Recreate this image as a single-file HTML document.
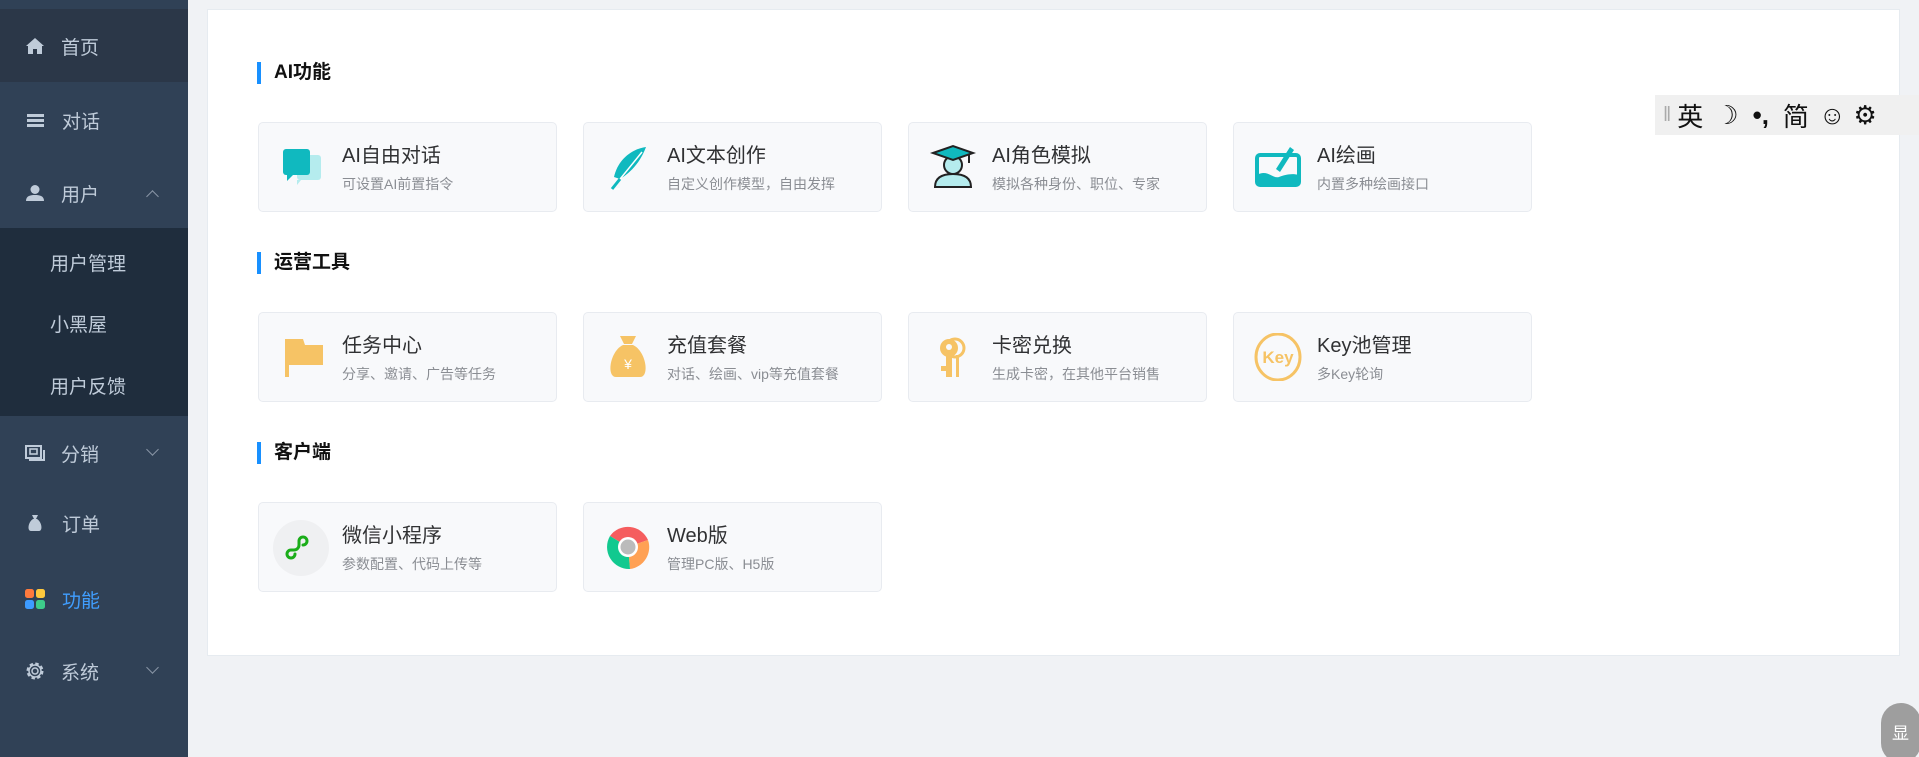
<!DOCTYPE html>
<html><head><meta charset="utf-8"><style>
*{margin:0;padding:0;box-sizing:border-box}
html,body{width:1919px;height:757px;overflow:hidden;background:#f0f2f5;font-family:"Liberation Sans","Noto Sans CJK SC",sans-serif;position:relative}
.side{position:absolute;left:0;top:0;width:188px;height:757px;background:#304156}
.it{position:absolute;left:0;width:188px;height:74px;display:flex;align-items:center;color:#bfcbd9;font-size:19px}
.it .ic{position:absolute;left:24px;width:22px;height:22px;display:flex;align-items:center;justify-content:center}
.it .tx{position:absolute;left:61px}
.it .ar{position:absolute;left:148px;width:9px;height:9px;border-left:1px solid #8a96a6;border-top:1px solid #8a96a6}
.sub{position:absolute;left:0;top:228px;width:188px;height:188px;background:#1f2d3d}
.sub div{position:absolute;left:50px;color:#bfcbd9;font-size:19px}
.main{position:absolute;left:207px;top:9px;width:1693px;height:647px;background:#fff;border:1px solid #e6ebf0}
.h{position:absolute;left:257px;font-size:19px;font-weight:bold;color:#111;padding-left:17px;line-height:22px}
.h:before{content:"";position:absolute;left:0;top:0;width:4px;height:22px;background:#1890ff}
.c{position:absolute;width:299px;height:90px;background:#f8f9fb;border:1px solid #e8ebf0;border-radius:5px}
.c .t{position:absolute;left:83px;top:16px;font-size:20px;color:#303133}
.c .d{position:absolute;left:83px;top:51px;font-size:14px;color:#8a8d93}
.c svg{position:absolute;left:20px;top:20px}
.tb{position:absolute;left:1655px;top:95px;width:264px;height:40px;background:#f0f0f0;font-size:26px;color:#111;display:flex;align-items:center}
.x{position:absolute;left:1881px;top:703px;width:40px;height:60px;background:#9e9e9e;border-radius:20px;color:#fff;font-size:17px;padding:16px 0 0 11px}
</style></head><body>
<div class="side">
<div style="position:absolute;top:9px;left:0;width:188px;height:73px;background:#2b3748"></div>
<div class="it" style="top:9px"><span class="ic"><svg width="18" height="16" viewBox="0 0 18 16"><path d="M9 0L0 8h2v8h5v-5h4v5h5V8h2z" fill="#bfcbd9"/></svg></span><span class="tx">首页</span></div>
<div class="it" style="top:83px"><span class="ic"><svg width="17" height="13"><rect y="0" width="17" height="3" fill="#bfcbd9"/><rect y="5" width="17" height="3" fill="#bfcbd9"/><rect y="10" width="17" height="3" fill="#bfcbd9"/></svg></span><span class="tx" style="left:62px">对话</span></div>
<div class="it" style="top:156px"><span class="ic"><svg width="18" height="16"><circle cx="9" cy="4.5" r="4.5" fill="#bfcbd9"/><path d="M0 16c0-5 4-6 9-6s9 1 9 6z" fill="#bfcbd9"/></svg></span><span class="tx">用户</span><span class="ar" style="transform:rotate(45deg);top:36px"></span></div>
<div class="sub"><div style="top:21px">用户管理</div><div style="top:82px">小黑屋</div><div style="top:144px">用户反馈</div></div>
<div class="it" style="top:416px"><span class="ic"><svg width="20" height="17" viewBox="0 0 20 17"><rect x="1" y="1" width="15" height="12" fill="none" stroke="#bfcbd9" stroke-width="2"/><rect x="5" y="4" width="7" height="5" fill="none" stroke="#bfcbd9" stroke-width="1.6"/><path d="M4 15h15V5" fill="none" stroke="#bfcbd9" stroke-width="2"/></svg></span><span class="tx">分销</span><span class="ar" style="transform:rotate(225deg);top:29px"></span></div>
<div class="it" style="top:486px"><span class="ic"><svg width="18" height="18" viewBox="0 0 18 18"><path d="M6 1h6l-2 4h-2zM7 5C2 8 1 17 5 17h8c4 0 3-9-2-12z" fill="#bfcbd9"/></svg></span><span class="tx" style="left:62px">订单</span></div>
<div class="it" style="top:562px;color:#409eff"><span class="ic"><svg width="20" height="20"><rect x="0" y="0" width="9" height="9" rx="2.5" fill="#ff7a3d"/><rect x="11" y="0" width="9" height="9" rx="2.5" fill="#ffc93d"/><rect x="0" y="11" width="9" height="9" rx="2.5" fill="#3d9bff"/><rect x="11" y="11" width="9" height="9" rx="2.5" fill="#3dcc8a"/></svg></span><span class="tx" style="left:62px">功能</span></div>
<div class="it" style="top:634px"><span class="ic"><svg width="20" height="20" viewBox="0 0 20 20"><circle cx="10" cy="10" r="7.5" fill="none" stroke="#bfcbd9" stroke-width="2" stroke-dasharray="3.5 2.4"/><circle cx="10" cy="10" r="6" fill="none" stroke="#bfcbd9" stroke-width="1.5"/><circle cx="10" cy="10" r="3" fill="none" stroke="#bfcbd9" stroke-width="1.5"/></svg></span><span class="tx">系统</span><span class="ar" style="transform:rotate(225deg);top:29px"></span></div>
</div>

<div class="main"></div>
<div class="h" style="top:62px">AI功能</div>
<div class="h" style="top:252px">运营工具</div>
<div class="h" style="top:442px">客户端</div>

<div class="c" style="left:258px;top:122px"><svg width="48" height="48" viewBox="0 0 48 48"><rect x="18" y="12" width="24" height="25" rx="3" fill="#b5ecee"/><path d="M22 37l-4 5v-5z" fill="#b5ecee"/><rect x="4" y="6" width="27" height="26" rx="3" fill="#10b9bf"/><path d="M8 32v6l6-6z" fill="#10b9bf"/></svg><div class="t">AI自由对话</div><div class="d">可设置AI前置指令</div></div>
<div class="c" style="left:583px;top:122px"><svg width="48" height="48" viewBox="0 0 48 48"><path d="M42 4C28 6 14 16 10 34l6 2c10-6 20-16 26-32z" fill="#10b9bf"/><path d="M38 9L8 46h8" stroke="#fff" stroke-width="1.5" fill="none"/><path d="M8 46l8-10" stroke="#10b9bf" stroke-width="3"/></svg><div class="t">AI文本创作</div><div class="d">自定义创作模型，自由发挥</div></div>
<div class="c" style="left:908px;top:122px"><svg width="48" height="48" viewBox="0 0 48 48"><path d="M6 44c0-10 8-13 18-13s18 3 18 13z" fill="#b5ecee" stroke="#222" stroke-width="2"/><circle cx="24" cy="22" r="9" fill="#b5ecee" stroke="#222" stroke-width="2"/><path d="M4 10l20-7 20 7-20 7z" fill="#10b9bf" stroke="#222" stroke-width="2"/><path d="M40 11v9" stroke="#222" stroke-width="2"/></svg><div class="t">AI角色模拟</div><div class="d">模拟各种身份、职位、专家</div></div>
<div class="c" style="left:1233px;top:122px"><svg width="48" height="48" viewBox="0 0 48 48"><rect x="3" y="12" width="42" height="30" rx="3" fill="none" stroke="#10b9bf" stroke-width="4"/><path d="M3 32c10-6 16 4 22 2s12-4 20-2v10H3z" fill="#10b9bf"/><path d="M36 4L22 26l4 3L40 7z" fill="#10b9bf"/></svg><div class="t">AI绘画</div><div class="d">内置多种绘画接口</div></div>

<div class="c" style="left:258px;top:312px"><svg width="48" height="48" viewBox="0 0 48 48"><rect x="6" y="6" width="4" height="38" fill="#f6c365"/><path d="M10 6h14l2 6h18v20H10z" fill="#f6c365"/></svg><div class="t">任务中心</div><div class="d">分享、邀请、广告等任务</div></div>
<div class="c" style="left:583px;top:312px"><svg width="48" height="48" viewBox="0 0 48 48"><path d="M16 3h16l-4 8h-8z" fill="#f6c365"/><path d="M19 12C6 18 2 44 12 44h24c10 0 6-26-7-32z" fill="#f6c365"/><text x="24" y="36" font-size="14" text-anchor="middle" fill="#fff" font-family="Liberation Sans">¥</text></svg><div class="t">充值套餐</div><div class="d">对话、绘画、vip等充值套餐</div></div>
<div class="c" style="left:908px;top:312px"><svg width="48" height="48" viewBox="0 0 48 48"><circle cx="26" cy="15" r="9" fill="none" stroke="#f6c365" stroke-width="3"/><circle cx="20" cy="15" r="9" fill="#f6c365"/><circle cx="20" cy="14" r="3" fill="#f8f9fb"/><rect x="17" y="22" width="6" height="22" fill="#f6c365"/><rect x="12" y="33" width="6" height="5" fill="#f6c365"/><rect x="27" y="22" width="3" height="22" fill="#f6c365"/></svg><div class="t">卡密兑换</div><div class="d">生成卡密，在其他平台销售</div></div>
<div class="c" style="left:1233px;top:312px"><svg width="48" height="48" viewBox="0 0 48 48"><ellipse cx="24" cy="24" rx="22" ry="23" fill="none" stroke="#f6c365" stroke-width="3"/><text x="24" y="30" font-size="17" font-weight="bold" text-anchor="middle" fill="#f6c365" font-family="Liberation Sans">Key</text></svg><div class="t">Key池管理</div><div class="d">多Key轮询</div></div>

<div class="c" style="left:258px;top:502px"><svg width="56" height="56" viewBox="0 0 56 56" style="left:14px;top:17px"><ellipse cx="28" cy="28" rx="28" ry="28" fill="#eff0f2"/><path d="M22 34a4 4 0 1 1-4-4h3a5 5 0 0 0 5-5v-4a4 4 0 1 1 4 4" fill="none" stroke="#1aad19" stroke-width="3" stroke-linecap="round"/></svg><div class="t">微信小程序</div><div class="d">参数配置、代码上传等</div></div>
<div class="c" style="left:583px;top:502px"><svg width="48" height="48" viewBox="0 0 48 48"><path d="M24 24L6 13A22 22 0 0 1 44 17z" fill="#f55d5e"/><path d="M24 24L44 17A22 22 0 0 1 26 46z" fill="#ffa154"/><path d="M24 24L26 46A22 22 0 0 1 6 13z" fill="#12c98f"/><circle cx="24" cy="24" r="10" fill="#fff"/><circle cx="24" cy="24" r="7.5" fill="#bbb"/></svg><div class="t">Web版</div><div class="d">管理PC版、H5版</div></div>

<div class="tb"><span style="color:#aaa;font-size:20px;margin:0 6px 0 8px">‖</span><span style="margin-right:12px">英</span><span style="margin-right:14px">☽</span><span style="margin-right:14px;font-weight:bold">•,</span><span style="margin-right:10px">简</span><span style="margin-right:8px">☺</span><span>⚙</span></div>
<div class="x">显</div>
</body></html>
